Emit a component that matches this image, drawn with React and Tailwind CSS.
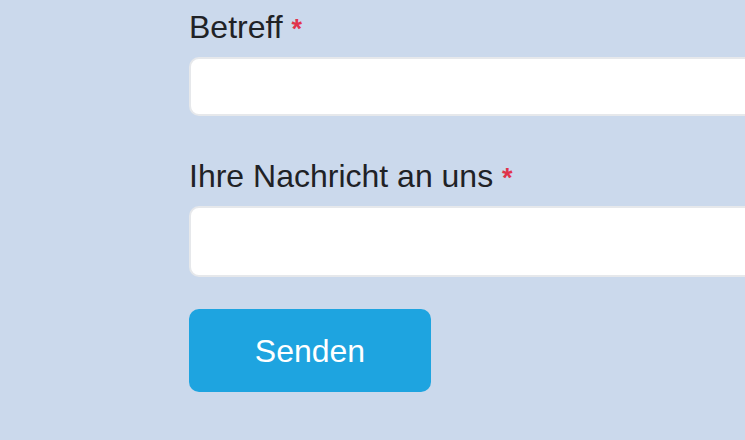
import React, { useState } from "react";

const Field = ({ label, name, value, onChange, height }) => (
  <div className="flex flex-col">
    <label htmlFor={name} className="text-[32px] leading-[37px] text-[#1f2226]">
      {label} <span className="text-[27px] font-bold text-[#e0344b]">*</span>
    </label>
    <input
      id={name}
      name={name}
      value={value}
      onChange={onChange}
      className={`mt-[9px] w-[600px] ${height} bg-white border-2 border-[#e6e8eb] rounded-[10px] px-4 outline-none text-[24px]`}
    />
  </div>
);

const App = () => {
  const [formData, setFormData] = useState({ betreff: "", nachricht: "" });

  const handleChange = (e) => {
    setFormData((prev) => ({ ...prev, [e.target.name]: e.target.value }));
  };

  return (
    <div
      className="w-[745px] h-[440px] overflow-hidden bg-[#cbd9ec] pl-[189px] pt-[9px]"
      style={{ fontFamily: '"Liberation Sans", Arial, sans-serif' }}
    >
      <form onSubmit={(e) => e.preventDefault()} className="flex flex-col">
        {/* betreff */}
        <Field
          label="Betreff"
          name="betreff"
          value={formData.betreff}
          onChange={handleChange}
          height="h-[59px]"
        />

        {/* nachricht */}
        <div className="mt-[42px]">
          <Field
            label="Ihre Nachricht an uns"
            name="nachricht"
            value={formData.nachricht}
            onChange={handleChange}
            height="h-[71px]"
          />
        </div>

        {/* submit */}
        <button className="mt-[32px] w-[242px] h-[83px] bg-[#1ea4e0] text-white text-[32px] rounded-[10px]">
          Senden
        </button>
      </form>
    </div>
  );
};

export default App;
